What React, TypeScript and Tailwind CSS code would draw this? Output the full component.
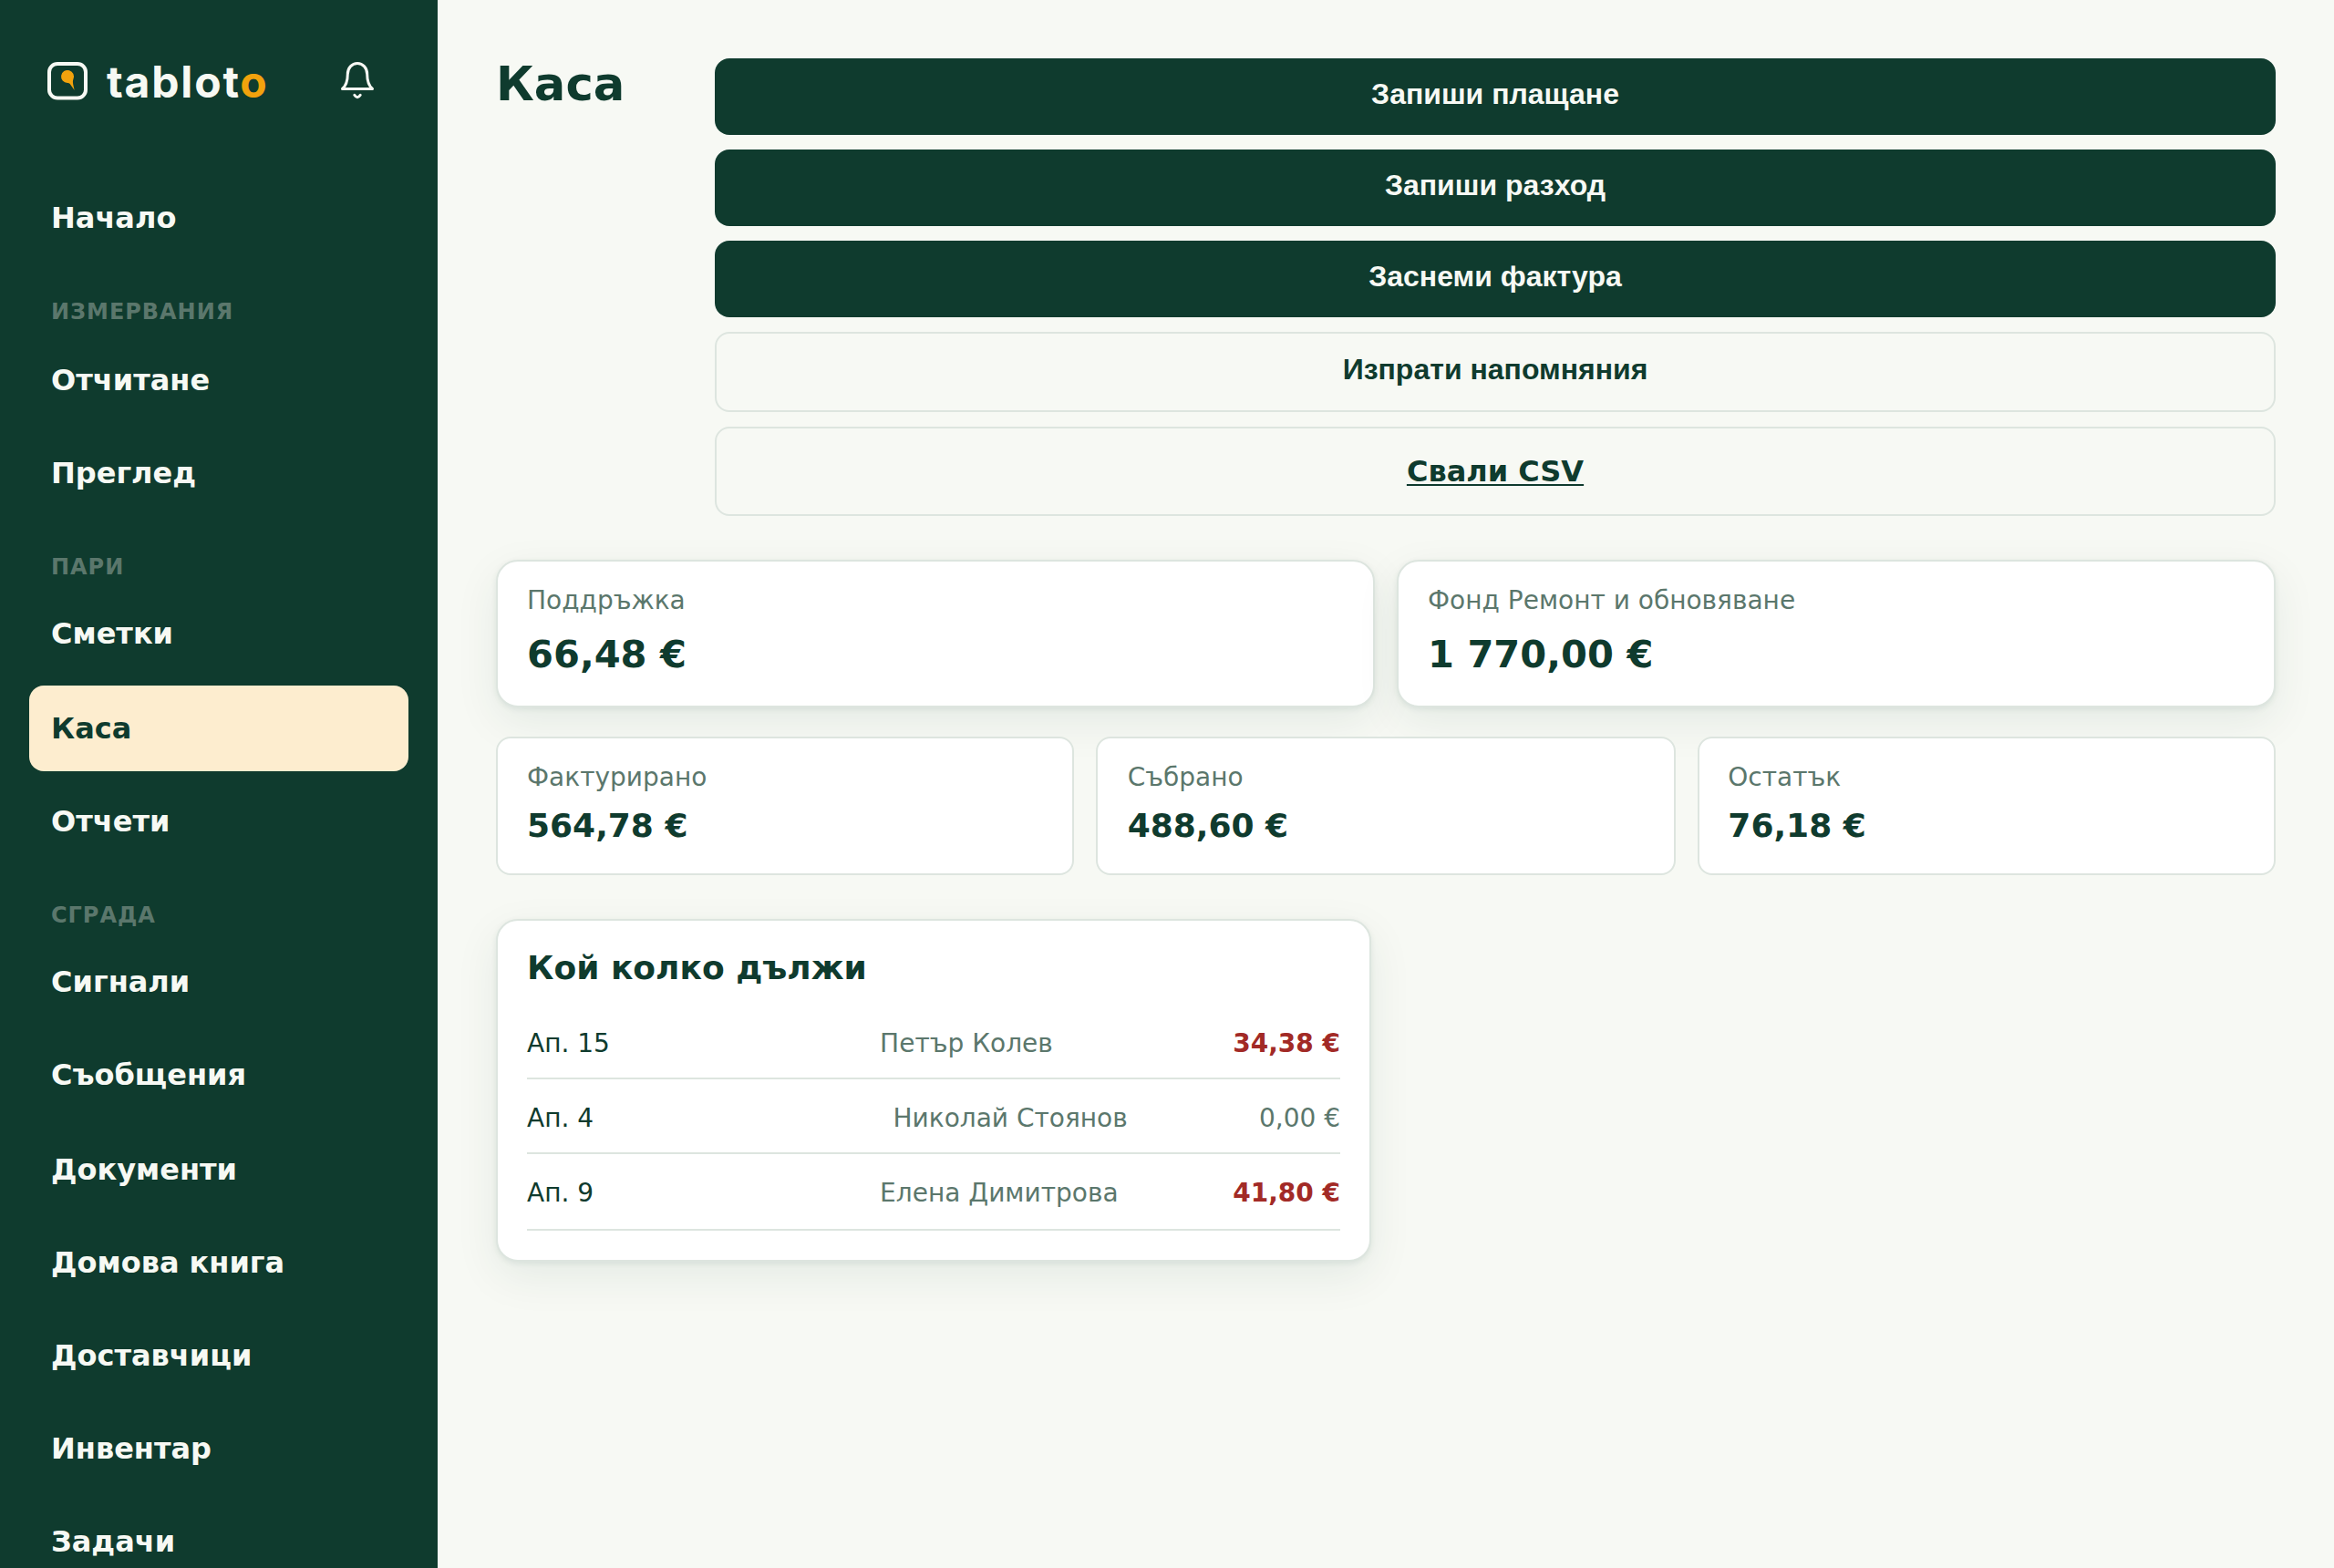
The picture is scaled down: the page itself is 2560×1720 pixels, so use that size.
import { clsx } from 'clsx';

interface NavEntry {
  label: string;
  heading?: boolean;
  active?: boolean;
  className?: string;
}

const NAV: NavEntry[] = [
  { label: 'Начало' },
  { label: 'Измервания', heading: true, className: 'h-[84px]' },
  { label: 'Отчитане' },
  { label: 'Преглед', className: 'mt-2' },
  { label: 'Пари', heading: true, className: 'h-[82px]' },
  { label: 'Сметки' },
  { label: 'Каса', active: true, className: 'mt-[10px]' },
  { label: 'Отчети', className: 'mt-2' },
  { label: 'Сграда', heading: true, className: 'h-[82px]' },
  { label: 'Сигнали' },
  { label: 'Съобщения', className: 'mt-2' },
  { label: 'Документи', className: 'mt-[10px]' },
  { label: 'Домова книга', className: 'mt-2' },
  { label: 'Доставчици', className: 'mt-2' },
  { label: 'Инвентар', className: 'mt-2' },
  { label: 'Задачи', className: 'mt-2' },
];

const FUNDS = [
  { label: 'Поддръжка', amount: '66,48 €' },
  { label: 'Фонд Ремонт и обновяване', amount: '1 770,00 €' },
];

const TOTALS = [
  { label: 'Фактурирано', amount: '564,78 €', className: 'pl-8' },
  { label: 'Събрано', amount: '488,60 €', className: 'pl-[32.67px]' },
  { label: 'Остатък', amount: '76,18 €', className: 'pl-[31.33px]' },
];

const DEBTS = [
  { unit: 'Ап. 15', owner: 'Петър Колев', amount: '34,38 €', due: true, className: 'h-[82px]' },
  { unit: 'Ап. 4', owner: 'Николай Стоянов', amount: '0,00 €', due: false, className: 'h-[82px]' },
  { unit: 'Ап. 9', owner: 'Елена Димитрова', amount: '41,80 €', due: true, className: 'h-[84px]' },
];

const CARD = 'bg-white border-2 border-[#dde5df] rounded-3xl shadow-[0_2px_6px_rgba(15,59,46,0.08),0_16px_48px_rgba(15,59,46,0.08)]';
const BUTTON = "w-full pb-[6px] rounded-2xl font-['Liberation_Sans',sans-serif] text-[32px] leading-9 font-bold";

function Logo() {
  return (
    <div className="flex items-start">
      <svg className="mt-[3px]" width="44" height="42" viewBox="0 0 44 42" fill="none">
        <rect x="2" y="2" width="40" height="37.5" rx="9" stroke="#f7f9f4" strokeWidth="4" />
        <path d="M22 23A7 7 0 1 1 28.4 18.9C27.2 21.5 28.6 26 29.7 31L24.7 24C23.900 23.100 23 23 22 23Z" fill="#f2a20d" />
      </svg>
      <span className="mt-px ml-[21px] font-['Inter',sans-serif] text-[48px] leading-[48px] font-bold tracking-[1.8px] text-[#f7f9f4]">
        tablot<span className="text-[#f2a20d]">o</span>
      </span>
    </div>
  );
}

function BellIcon() {
  return (
    <svg width="40" height="44" viewBox="0 0 40 44" fill="none" stroke="#f7f9f4" strokeWidth="3" strokeLinecap="round" strokeLinejoin="round">
      <path d="M9.300 16.500C9.300 9.500 14 4.500 20 4.500S30.700 9.500 30.700 16.500C30.700 24.500 32.500 29 36.500 32.500H3.500C7.500 29 9.300 24.500 9.300 16.500Z" />
      <path d="M16.800 39.300Q20 44.300 23.200 39.300" />
    </svg>
  );
}

function Sidebar() {
  return (
    <aside className="w-[480px] h-full shrink-0 overflow-hidden bg-[#0f3b2e] px-8">
      <div className="flex items-start justify-between pt-[65px] pl-5 h-[192px]">
        <Logo />
        <div className="mr-9">
          <BellIcon />
        </div>
      </div>
      <nav className="flex flex-col">
        {NAV.map((entry) =>
          entry.heading ? (
            <div
              key={entry.label}
              className={clsx('pt-10 px-6 text-2xl leading-8 font-bold uppercase tracking-[0.04em] text-[#5b776c]', entry.className)}
            >
              {entry.label}
            </div>
          ) : (
            <a
              key={entry.label}
              className={clsx(
                'block h-[94px] shrink-0 px-6 rounded-2xl text-[32px] leading-[94px] font-bold',
                entry.active ? 'bg-[#fdedcf] text-[#0f3b2e]' : 'text-[#f7f9f4]',
                entry.className,
              )}
            >
              {entry.label}
            </a>
          ),
        )}
      </nav>
    </aside>
  );
}

export default function App() {
  return (
    <div className="flex w-[2560px] h-[1720px] overflow-hidden bg-[#f7f9f4] text-[#0f3b2e] font-['DejaVu_Sans',sans-serif]">
      <Sidebar />
      <main className="flex-1 px-16 pt-16">
        <header className="flex justify-between">
          <h1 className="text-[51.2px] leading-[56px] font-bold">Каса</h1>
          <div className="w-[1712px] flex flex-col gap-4">
            <button className={clsx(BUTTON, 'h-[84px] bg-[#0f3b2e] text-[#f7f9f4]')}>Запиши плащане</button>
            <button className={clsx(BUTTON, 'h-[84px] bg-[#0f3b2e] text-[#f7f9f4]')}>Запиши разход</button>
            <button className={clsx(BUTTON, 'h-[84px] bg-[#0f3b2e] text-[#f7f9f4]')}>Заснеми фактура</button>
            <button className={clsx(BUTTON, 'h-[88px] border-2 border-[#dde5df]')}>Изпрати напомняния</button>
            <a className="block h-[98px] rounded-2xl border-2 border-[#dde5df] text-center text-[32px] leading-[94px] font-bold underline decoration-2 underline-offset-[3px]">
              Свали CSV
            </a>
          </div>
        </header>

        <section className="mt-12 grid grid-cols-2 gap-6">
          {FUNDS.map((fund) => (
            <div key={fund.label} className={clsx(CARD, 'h-[162px] px-8 pt-[19px]')}>
              <p className="text-[28px] leading-[48px] text-[#5b776c]">{fund.label}</p>
              <p className="text-[41.6px] leading-[70px] font-bold">{fund.amount}</p>
            </div>
          ))}
        </section>

        <section className="mt-8 grid grid-cols-[634fr_636fr_634fr] gap-6">
          {TOTALS.map((total) => (
            <div key={total.label} className={clsx('h-[152px] pr-8 pt-[19px] bg-white border-2 border-[#dde5df] rounded-2xl', total.className)}>
              <p className="text-[28px] leading-[48px] text-[#5b776c]">{total.label}</p>
              <p className="text-[36px] leading-[58px] font-bold">{total.amount}</p>
            </div>
          ))}
        </section>

        <section className={clsx(CARD, 'mt-12 w-[960px] h-[376px] px-8 pt-[22px]')}>
          <h2 className="text-[36px] leading-[60px] font-bold">Кой колко дължи</h2>
          <ul className="mt-[10px]">
            {DEBTS.map((debt) => (
              <li
                key={debt.unit}
                className={clsx('grid grid-cols-[1fr_1fr_auto] gap-4 border-b-2 border-[#dde5df] pt-[19px] text-[28px] leading-[48px]', debt.className)}
              >
                <span>{debt.unit}</span>
                <span className="text-[#5b776c]">{debt.owner}</span>
                <span className={debt.due ? 'font-bold text-[#a22a26]' : 'text-[#5b776c]'}>{debt.amount}</span>
              </li>
            ))}
          </ul>
        </section>
      </main>
    </div>
  );
}
